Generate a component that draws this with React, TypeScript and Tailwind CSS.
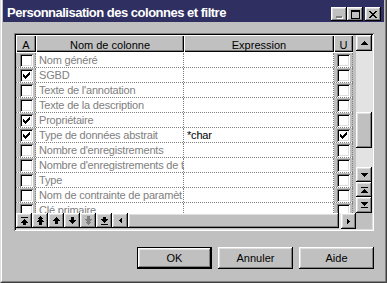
import type { JSX } from 'react'

const raised =
  'shadow-[inset_-1px_-1px_0_#000,inset_1px_1px_0_#fff,inset_-2px_-2px_0_#808080,inset_2px_2px_0_#dfdfdf]'
const sunken =
  'shadow-[inset_1px_1px_0_#808080,inset_-1px_-1px_0_#fff,inset_2px_2px_0_#000,inset_-2px_-2px_0_#dfdfdf]'
const headerCell =
  'shadow-[inset_1px_1px_0_#fff,inset_-1px_-1px_0_#000,inset_-2px_-2px_0_#808080]'

// pixel-art glyphs, '#' = one pixel
const G = {
  up: ['...#...', '..###..', '.#####.', '#######', '..###..', '..###..', '..###..'],
  top: ['#######', '.......', '...#...', '..###..', '.#####.', '#######', '..###..', '..###..'],
  dblUp: ['...#...', '..###..', '.#####.', '..###..', '.#####.', '#######', '..###..', '..###..', '..###..'],
  down: ['..###..', '..###..', '..###..', '#######', '.#####.', '..###..', '...#...'],
  dblDown: ['..###..', '..###..', '..###..', '#######', '.#####.', '..###..', '.#####.', '..###..', '...#...'],
  bottom: ['..###..', '..###..', '#######', '.#####.', '..###..', '...#...', '.......', '#######'],
  left: ['..#', '.##', '###', '.##', '..#'],
  right: ['#..', '##.', '###', '##.', '#..'],
  triUp: ['...#...', '..###..', '.#####.', '#######'],
  triDown: ['#######', '.#####.', '..###..', '...#...'],
  barTriUp: ['#######', '.......', '...#...', '..###..', '.#####.', '#######'],
  triDownBar: ['#######', '.#####.', '..###..', '...#...', '.......', '#######'],
  check: ['......#', '.....##', '#...###', '##.###.', '#####..', '.###...', '..#....'],
  min: ['######', '######'],
  max: [
    '#########',
    '#########',
    '#.......#',
    '#.......#',
    '#.......#',
    '#.......#',
    '#.......#',
    '#.......#',
    '#########',
  ],
  close: ['##....##', '.##..##.', '..####..', '...##...', '..####..', '.##..##.', '##....##'],
}

function Pix({ rows, color = '#000', shadow }: { rows: string[]; color?: string; shadow?: string }) {
  const w = Math.max(...rows.map((r) => r.length)) + (shadow ? 1 : 0)
  const h = rows.length + (shadow ? 1 : 0)
  const back: JSX.Element[] = []
  const front: JSX.Element[] = []
  rows.forEach((r, y) =>
    [...r].forEach((c, x) => {
      if (c !== '#') return
      if (shadow) back.push(<rect key={`s${x}-${y}`} x={x + 1} y={y + 1} width={1} height={1} fill={shadow} />)
      front.push(<rect key={`p${x}-${y}`} x={x} y={y} width={1} height={1} fill={color} />)
    })
  )
  return (
    <svg width={w} height={h} shapeRendering="crispEdges" className="block">
      {back}
      {front}
    </svg>
  )
}

const rows = [
  { a: false, name: 'Nom généré', expr: '', u: false },
  { a: true, name: 'SGBD', expr: '', u: false },
  { a: false, name: "Texte de l'annotation", expr: '', u: false },
  { a: false, name: 'Texte de la description', expr: '', u: false },
  { a: true, name: 'Propriétaire', expr: '', u: false },
  { a: true, name: 'Type de données abstrait', expr: '*char', u: true },
  { a: false, name: "Nombre d'enregistrements", expr: '', u: false },
  { a: false, name: "Nombre d'enregistrements de t", expr: '', u: false },
  { a: false, name: 'Type', expr: '', u: false },
  { a: false, name: 'Nom de contrainte de paramèt', expr: '', u: false },
  { a: false, name: 'Clé primaire', expr: '', u: false },
]

function CheckBox({ on }: { on: boolean }) {
  return (
    <div className={`w-[13px] h-[13px] bg-white flex items-center justify-center ${sunken}`}>
      {on && <Pix rows={G.check} />}
    </div>
  )
}

function ScrollBtn({ glyph, h = 'h-[15px]' }: { glyph: string[]; h?: string }) {
  return <div className={`${h} w-full flex items-center justify-center bg-[#c0c0c0] ${raised}`}><Pix rows={glyph} /></div>
}

export default function App() {
  return (
    <div className="w-[387px] h-[283px] overflow-hidden bg-[#c0c0c0] border-l border-l-[#dfdfdf] border-r border-r-[#404040] border-b border-b-[#404040] font-['Liberation_Sans',Arial,sans-serif] text-black">
      <div className="h-full border-l border-l-white border-r border-r-[#808080] border-b border-b-[#808080] px-px">
        {/* Title bar */}
        <div className="h-[22px] bg-[#302f62] flex items-start pl-[4px] pr-[3px]">
          <span className="mt-[5px] text-[13px] leading-[15px] font-bold tracking-[-0.5px] text-white whitespace-nowrap">
            Personnalisation des colonnes et filtre
          </span>
          <div className="ml-auto mt-[7px] flex">
            <div className={`w-[16px] h-[14px] bg-[#c0c0c0] flex items-end justify-center pb-[2px] ${raised}`}>
              <Pix rows={G.min} color="#808080" shadow="#fff" />
            </div>
            <div className={`w-[16px] h-[14px] bg-[#c0c0c0] flex items-center justify-center ${raised}`}>
              <Pix rows={G.max} />
            </div>
            <div className={`ml-[2px] w-[16px] h-[14px] bg-[#c0c0c0] flex items-center justify-center ${raised}`}>
              <Pix rows={G.close} />
            </div>
          </div>
        </div>

        {/* Grid */}
        <div className={`mt-[11px] ml-[11px] w-[360px] h-[198px] p-[2px] flex flex-col ${sunken}`}>
          <div className="h-[178px] flex">
            <div className="w-[337px] flex flex-col overflow-hidden">
              <div className="h-[17px] flex shrink-0 text-[11px] leading-[12px]">
                <div className={`w-[20px] flex justify-center pt-[4px] ${headerCell}`}>A</div>
                <div className={`w-[148px] flex justify-center pt-[4px] ${headerCell}`}>Nom de colonne</div>
                <div className={`w-[150px] flex justify-center pt-[4px] ${headerCell}`}>Expression</div>
                <div className={`w-[19px] flex justify-center pt-[4px] ${headerCell}`}>U</div>
              </div>
              <div className="flex-1 bg-white pt-px overflow-hidden">
                {rows.map((r) => (
                  <div key={r.name} className="h-[15px] flex border-b border-dotted border-b-[#808080] text-[11px] leading-[14px] tracking-[-0.2px]">
                    <div className="w-[20px] bg-[#c0c0c0] border-r border-dotted border-r-[#808080] pl-[4px] pt-px">
                      <CheckBox on={r.a} />
                    </div>
                    <div className="w-[148px] border-r border-dotted border-r-[#808080] pl-[3px] text-[#808080] whitespace-nowrap">
                      {r.name}
                    </div>
                    <div className="w-[150px] border-r border-dotted border-r-[#808080] pl-[3px] whitespace-nowrap">
                      {r.expr}
                    </div>
                    <div className="w-[19px] bg-[#c0c0c0] border-r border-dotted border-r-[#808080] pl-[3px] pt-px">
                      <CheckBox on={r.u} />
                    </div>
                  </div>
                ))}
              </div>
            </div>
            <div className="w-[3px]" />
            <div className="w-[16px] flex flex-col">
              <ScrollBtn glyph={G.triUp} h="h-[16px]" />
              <div className="flex-1 bg-[#e3e3e3]">
                <div className={`mt-[61px] h-[36px] bg-[#c0c0c0] ${raised}`} />
              </div>
              <ScrollBtn glyph={G.triDown} />
              <ScrollBtn glyph={G.barTriUp} />
              <ScrollBtn glyph={G.triDownBar} h="h-[16px]" />
            </div>
          </div>

          {/* Toolbar + horizontal scrollbar */}
          <div className="h-[16px] flex">
            {[G.top, G.dblUp, G.up, G.down].map((g, i) => (
              <div key={i} className={`w-[16px] h-[15px] flex items-center justify-center bg-[#c0c0c0] ${raised}`}>
                <Pix rows={g} />
              </div>
            ))}
            <div className={`w-[16px] h-[15px] flex items-center justify-center bg-[#c0c0c0] ${raised}`}>
              <Pix rows={G.dblDown} color="#808080" />
            </div>
            <div className={`w-[16px] h-[15px] flex items-center justify-center bg-[#c0c0c0] ${raised}`}>
              <Pix rows={G.bottom} />
            </div>
            <div className={`w-[16px] h-[15px] flex items-center justify-center bg-[#c0c0c0] ${raised}`}>
              <Pix rows={G.left} />
            </div>
            <div className={`flex-1 h-[15px] bg-[#c0c0c0] ${raised}`} />
            <div className="w-[2px] bg-[#e3e3e3]" />
            <div className={`w-[15px] h-[16px] flex items-center justify-center bg-[#c0c0c0] ${raised}`}>
              <Pix rows={G.right} />
            </div>
            <div className="w-[16px]" />
          </div>
        </div>

        {/* Buttons */}
        <div className="mt-[16px] ml-[11px] w-[360px] flex justify-end gap-[6px] text-[11px]">
          <div className="w-[75px] h-[22px] border border-black">
            <div className={`h-full flex items-center justify-center bg-[#c0c0c0] ${raised}`}>OK</div>
          </div>
          <div className={`w-[75px] h-[22px] flex items-center justify-center bg-[#c0c0c0] ${raised}`}>Annuler</div>
          <div className={`w-[75px] h-[22px] flex items-center justify-center bg-[#c0c0c0] ${raised}`}>Aide</div>
        </div>
      </div>
    </div>
  )
}
